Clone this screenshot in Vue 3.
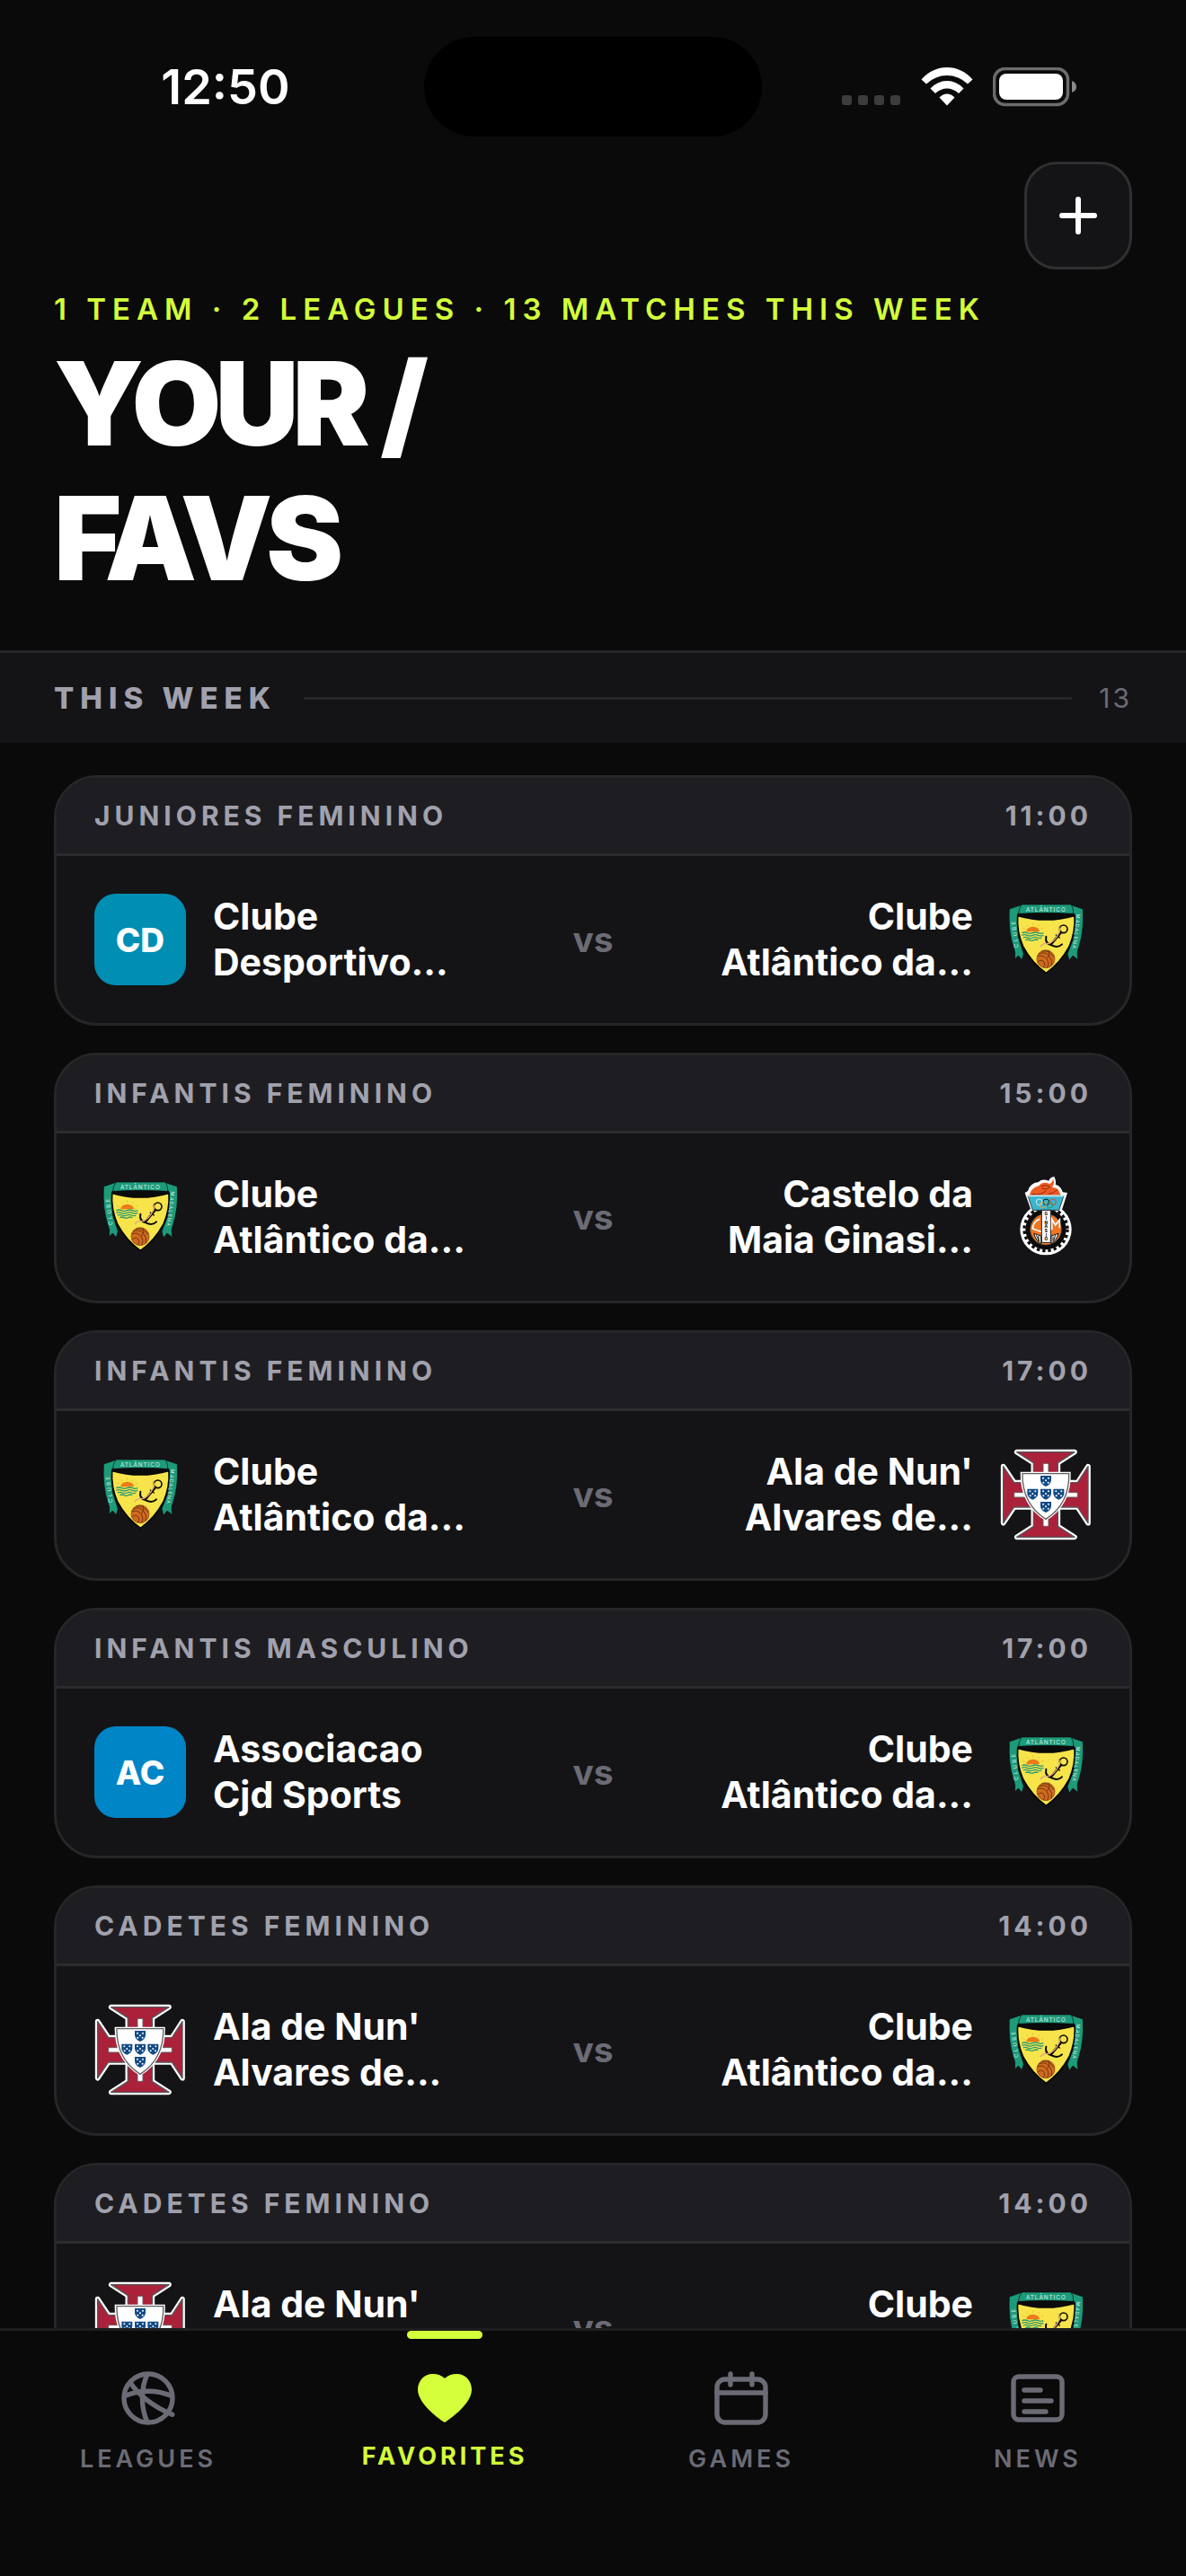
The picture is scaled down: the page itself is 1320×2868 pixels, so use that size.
<template>
  <div class="screen">
    <div class="status-bar">
      <div class="status-time">12:50</div>
      <div class="island"></div>
      <div class="status-icons">
        <svg width="66" height="44" viewBox="0 0 66 44" fill="#3c3c3c">
          <rect x="0" y="31" width="11" height="11" rx="3" />
          <rect x="18" y="31" width="11" height="11" rx="3" />
          <rect x="36" y="31" width="11" height="11" rx="3" />
          <rect x="54" y="31" width="11" height="11" rx="3" />
        </svg>
        <svg class="wifi" width="58" height="44" viewBox="0 0 58 44" fill="#fff">
          <path d="M0.500 13.500Q12.500 0 29 0T57.500 13.500L52 18.500Q42 9 29 9T6 18.500Z" />
          <path d="M10.500 23.500Q18.500 15 29 15T47.500 23.500L42 29Q36 23.500 29 23.500T16 29Z" />
          <path d="M20.500 33.500Q24.500 29.500 29 29.500T37.500 33.500L29 42.500Z" />
        </svg>
        <svg width="94" height="44" viewBox="0 0 94 44">
          <rect x="1.500" y="1.500" width="82" height="40" rx="12" fill="none" stroke="#6c6c6c" stroke-width="3.500" />
          <rect x="7" y="7" width="71" height="29" rx="8" fill="#fff" />
          <path d="M88 15Q93 17 93 21.500T88 28Z" fill="#8a8a8a" />
        </svg>
      </div>
    </div>

    <header class="page-header">
      <button class="btn-add" type="button" aria-label="Add favorite">
        <svg width="42" height="42" viewBox="0 0 42 42" stroke="#fff" stroke-width="6" stroke-linecap="round">
          <path d="M21 3V39M3 21H39" />
        </svg>
      </button>
      <p class="summary">1 TEAM · 2 LEAGUES · 13 MATCHES THIS WEEK</p>
      <h1>YOUR /<br />FAVS</h1>
    </header>

    <div class="section-bar">
      <h2>THIS WEEK</h2>
      <span class="rule"></span>
      <span class="count">13</span>
    </div>

    <main class="match-list">
      <article v-for="m in matches" :key="m.id" class="match">
        <div class="match-head">
          <span class="league">{{ m.league }}</span>
          <span class="time">{{ m.time }}</span>
        </div>
        <div class="match-body">
          <template v-for="(team, i) in m.teams" :key="i">
            <span v-if="i === 1" class="vs">vs</span>
            <div :class="['team', { away: i === 1 }]">
              <svg v-if="team.crest === 'atlantico'" class="crest" viewBox="39 45 306 306">
                <path d="M70 96 L112 82 L104 112 L98 120 L100 190 L118 246 L112 266 L100 252 L88 264 Q92 240 84 224 Q66 170 70 96Z" fill="#1d9a7a" stroke="#0b0b0b" stroke-width="2" />
                <path d="M316 96 L274 82 L282 112 L288 120 L286 190 L264 246 L270 268 L282 252 L300 266 Q294 240 302 224 Q320 170 316 96Z" fill="#1d9a7a" stroke="#0b0b0b" stroke-width="2" />
                <path d="M98 118 Q192 146 288 118 Q292 170 270 222 Q240 278 193 310 Q146 278 116 222 Q94 170 98 118Z" fill="#f6e44a" stroke="#070707" stroke-width="5" />
                <path d="M98 110 H288 V120 Q192 142 98 120Z" fill="#0b0b0c" />
                <path d="M112 81 H276 Q286 96 284 112 Q192 106 101 112 Q100 96 112 81Z" fill="#1d9a7a" stroke="#0b0b0b" stroke-width="2" />
                <text x="193" y="104" font-size="19" text-anchor="middle" letter-spacing="3" fill="#d9f3ea">ATLÂNTICO</text>
                <text transform="translate(100 224) rotate(-97)" font-size="18" letter-spacing="7" fill="#d9f3ea">CLUBE</text>
                <text transform="translate(295 112) rotate(97)" font-size="17" letter-spacing="3" fill="#d9f3ea">MADALENA</text>
                <path d="M127 172 A22 17 0 0 1 171 172Z" fill="#ee7a1a" />
                <path d="M149 150V142M133 154L128 148M165 154L171 147M122 164L113 159M176 164L184 159" stroke="#efae2c" stroke-width="2" />
                <path d="M112 176 q9 -4 18 0 t18 0 t18 0 t18 0M112 184 q9 -4 18 0 t18 0 t18 0 t18 0M116 192 q8 -4 16 0 t16 0 t16 0 t14 0M124 200 q7 -4 14 0 t14 0 t14 0" fill="none" stroke="#2a9a72" stroke-width="4" />
                <g fill="none" stroke="#0a0a0a" stroke-width="5" stroke-linecap="round">
                  <circle cx="251" cy="163" r="13" />
                  <path d="M243 174 L211 212" stroke-width="8" />
                  <path d="M226 183 L238 192" stroke-width="4" />
                  <path d="M193 188 Q188 212 211 217 Q232 228 246 214" stroke-width="6" />
                </g>
                <path d="M234 154 Q244 168 232 182 Q222 204 200 212 Q184 208 174 222" fill="none" stroke="#dfa57a" stroke-width="4" />
                <circle cx="192" cy="263" r="30" fill="#d06a20" stroke="#7a3a10" stroke-width="2" />
                <path d="M164 254 Q184 248 194 262 Q206 278 196 292M168 246 Q190 236 204 254 Q216 268 210 286M178 237 Q202 232 218 256M166 272 Q180 262 186 274 Q192 284 184 291M196 262 Q208 246 200 234" fill="none" stroke="#6f350f" stroke-width="3" />
              </svg>

              <svg v-else-if="team.crest === 'castelo'" class="crest" viewBox="39 42 306 306">
                <circle cx="192" cy="236" r="86" fill="#fff" />
                <path d="M122 114 L132 108 Q138 82 168 78 Q178 66 202 74 Q206 62 220 60 Q228 78 224 86 Q244 92 248 112 L264 114 L244 176 H144Z" fill="#fff" />
                <circle cx="192" cy="236" r="68" fill="#0b0b0c" />
                <circle cx="192" cy="236" r="72" fill="none" stroke="#0b0b0c" stroke-width="10" stroke-dasharray="10 9" />
                <circle cx="192" cy="236" r="52" fill="#ee7623" stroke="#555" stroke-width="2" />
                <path d="M137 124 Q140 98 170 90 Q182 74 204 84 Q214 80 216 68 Q224 82 212 96 Q236 94 242 124Z" fill="#ee5a24" />
                <path d="M146 118 Q176 124 194 106 M176 92 Q194 84 206 94 Q196 106 178 98 M200 118 Q220 116 230 104" fill="none" stroke="#8e2a12" stroke-width="3" />
                <path d="M132 124 H252 L236 172 H148Z" fill="#3ab5cf" stroke="#3a4044" stroke-width="3" />
                <path d="M132 124 H252" stroke="#c9e9ef" stroke-width="5" />
                <g fill="none" stroke-width="3">
                  <circle cx="170" cy="145" r="10" stroke="#d8f1f7" />
                  <circle cx="193" cy="145" r="10" stroke="#111" />
                  <circle cx="216" cy="145" r="10" stroke="#d84830" />
                  <circle cx="182" cy="155" r="10" stroke="#f0a030" />
                  <circle cx="205" cy="155" r="10" stroke="#2f9c5a" />
                </g>
                <path d="M178 172 H208 V280 H178Z" fill="#fff" stroke="#222" stroke-width="3" />
                <g font-size="14" font-weight="800" text-anchor="middle" fill="#111">
                  <text v-for="(c, n) in 'GINASIO'" :key="n" x="193" :y="190 + n * 14">{{ c }}</text>
                </g>
                <path d="M172 202 Q150 208 148 234 L176 244M212 238 V202 L224 222 L238 204 V232" fill="none" stroke="#fff" stroke-width="5" />
                <path d="M152 250 L176 258 V284 Q160 276 152 250ZM234 250 L210 258 V284 Q226 276 234 250Z" fill="#fff" stroke="#111" stroke-width="3" />
                <path d="M160 256 L170 276M168 258 V278M216 260 V278M224 256 L218 274" stroke="#111" stroke-width="3" />
              </svg>

              <svg v-else-if="team.crest === 'ala'" class="crest" viewBox="39 39 306 306">
                <g stroke-linejoin="round">
                  <path :d="crossPath" fill="#fff" stroke="#fff" stroke-width="17" />
                  <path :d="crossPath" fill="#ab2139" stroke="#55555a" stroke-width="4" />
                </g>
                <path d="M183 88 H201 V298 H183ZM86 185 H298 V201 H86Z" fill="#fff" stroke="#66585c" stroke-width="3" />
                <path d="M107 116 H275 Q280 226 192 280 Q104 226 107 116Z" fill="#fff" />
                <path d="M114 122 H269 Q272 222 192 274 Q112 222 114 122Z" fill="#fff" stroke="#606064" stroke-width="4" />
                <g v-for="s in shields" :key="s.id" :transform="`translate(${s.x} ${s.y})`">
                  <path d="M-18 -17 H18 V-2 Q17 12 0 19 Q-17 12 -18 -2Z" fill="#124a86" />
                  <g fill="#fff">
                    <circle cx="-9" cy="-9" r="3" />
                    <circle cx="9" cy="-9" r="3" />
                    <circle cx="0" cy="-1" r="3" />
                    <circle cx="-8" cy="6" r="3" />
                    <circle cx="8" cy="6" r="3" />
                  </g>
                </g>
              </svg>

              <span v-else :class="['avatar', team.tone]">{{ team.initials }}</span>
              <span class="name">{{ team.name }}</span>
            </div>
          </template>
        </div>
      </article>
    </main>

    <nav class="tab-bar">
      <button
        v-for="tab in tabs"
        :key="tab.id"
        type="button"
        :class="['tab', { active: activeTab === tab.id }]"
        @click="activeTab = tab.id"
      >
        <svg class="tab-icon" viewBox="0 0 24 24">
          <path v-for="d in tab.paths" :key="d" :d="d" />
        </svg>
        <span>{{ tab.label }}</span>
      </button>
    </nav>
  </div>
</template>

<script setup>
import { ref } from 'vue'

const activeTab = ref('favorites')

const atlantico = { name: 'Clube\nAtlântico da...', crest: 'atlantico' }
const ala = { name: "Ala de Nun'\nAlvares de...", crest: 'ala' }
const castelo = { name: 'Castelo da\nMaia Ginasi...', crest: 'castelo' }
const desportivo = { name: 'Clube\nDesportivo...', initials: 'CD', tone: 'teal' }
const cjd = { name: 'Associacao\nCjd Sports', initials: 'AC', tone: 'blue' }

const matches = ref([
  { id: 1, league: 'JUNIORES FEMININO', time: '11:00', teams: [desportivo, atlantico] },
  { id: 2, league: 'INFANTIS FEMININO', time: '15:00', teams: [atlantico, castelo] },
  { id: 3, league: 'INFANTIS FEMININO', time: '17:00', teams: [atlantico, ala] },
  { id: 4, league: 'INFANTIS MASCULINO', time: '17:00', teams: [cjd, atlantico] },
  { id: 5, league: 'CADETES FEMININO', time: '14:00', teams: [ala, atlantico] },
  { id: 6, league: 'CADETES FEMININO', time: '14:00', teams: [ala, atlantico] }
])

const tabs = [
  {
    id: 'leagues',
    label: 'LEAGUES',
    paths: [
      'M12 3a9 9 0 1 0 0 18a9 9 0 1 0 0-18',
      'M11.600 3.200c-2.400 5.500-2.400 12 0 17.600',
      'M3.200 11.200c5.500-2.400 12-2.400 17.600 0',
      'M5.400 6.300c3 4.500 8.500 8.700 15.500 11.800'
    ]
  },
  {
    id: 'favorites',
    label: 'FAVORITES',
    paths: ['M12 21C10 19.800 2 14 2 8.800C2 5.400 4.600 3 7.500 3C9.300 3 11 3.600 12 4.700C13 3.600 14.700 3 16.500 3C19.400 3 22 5.400 22 8.800C22 14 14 19.800 12 21Z']
  },
  {
    id: 'games',
    label: 'GAMES',
    paths: [
      'M6 5H18A3 3 0 0 1 21 8V18A3 3 0 0 1 18 21H6A3 3 0 0 1 3 18V8A3 3 0 0 1 6 5Z',
      'M3 10H21',
      'M8 3V7',
      'M16 3V7'
    ]
  },
  {
    id: 'news',
    label: 'NEWS',
    paths: [
      'M5 4H19A2 2 0 0 1 21 6V18A2 2 0 0 1 19 20H5A2 2 0 0 1 3 18V6A2 2 0 0 1 5 4Z',
      'M7 9H13',
      'M7 13H17',
      'M7 17H15'
    ]
  }
]

const crossPath =
  'M95 50H288L232 86V152H298L333 98V287L298 234H232V298L288 334H95L151 298V234H86L50 287V98L86 152H151V86Z'

const shields = [
  { id: 'top', x: 192, y: 146 },
  { id: 'left', x: 148, y: 190 },
  { id: 'center', x: 192, y: 190 },
  { id: 'right', x: 235, y: 190 },
  { id: 'bottom', x: 192, y: 233 }
]
</script>

<style>
body { margin: 0; background: #0a0a0a; }
</style>

<style scoped>
.screen { display: flex; flex-direction: column; height: 100vh; overflow: hidden; background: #0a0a0a; color: #fff; font-family: Inter, "Liberation Sans", sans-serif; }
button { font-family: inherit; cursor: pointer; }

.status-bar { display: grid; grid-template-columns: 1fr 376px 1fr; align-items: center; padding-top: 41px; flex: none; }
.status-time { padding-left: 30px; text-align: center; font-size: 54px; line-height: 60px; font-weight: 600; }
.island { height: 111px; border-radius: 56px; background: #000; }
.status-icons { display: flex; align-items: center; justify-content: flex-end; padding-right: 121px; }
.wifi { margin: 0 22px; }

.page-header { display: flex; flex-direction: column; padding: 28px 60px 50px; flex: none; }
.btn-add { align-self: flex-end; display: flex; align-items: center; justify-content: center; width: 120px; height: 120px; padding: 0; background: #141416; border: 3px solid #303032; border-radius: 36px; }
.summary { margin: 24px 0 0; font-size: 33px; line-height: 40px; font-weight: 600; letter-spacing: 7px; color: #d4ff3a; }
h1 { margin: 10px 0 0; font-size: 129px; line-height: 150px; font-weight: 900; letter-spacing: -7px; }

.section-bar { display: flex; align-items: center; gap: 30px; height: 100px; padding: 0 60px; background: #141416; border-top: 3px solid #262628; flex: none; }
h2 { margin: 0; font-size: 33px; line-height: 40px; font-weight: 800; letter-spacing: 7px; color: #a1a1ad; }
.rule { flex: 1; height: 3px; background: #262628; }
.count { font-size: 30px; line-height: 40px; letter-spacing: 3px; color: #6b6b76; }

.match-list { flex: 1; min-height: 0; overflow: hidden; display: flex; flex-direction: column; gap: 30px; padding: 36px 60px 0; }
.match { flex: none; overflow: hidden; background: #141416; border: 3px solid #262628; border-radius: 48px; }
.match-head { display: flex; justify-content: space-between; align-items: center; height: 84px; padding: 0 42px; background: #1e1e22; border-bottom: 3px solid #2c2c2f; color: #a1a1ad; font-size: 30px; line-height: 36px; font-weight: 700; }
.league { letter-spacing: 5px; }
.time { letter-spacing: 4px; }
.match-body { display: grid; grid-template-columns: 1fr auto 1fr; align-items: center; gap: 30px; padding: 42px; }
.team { display: flex; align-items: center; gap: 30px; }
.away { flex-direction: row-reverse; text-align: right; }
.name { font-size: 41px; line-height: 51px; font-weight: 700; white-space: pre-line; }
.vs { font-size: 39px; line-height: 48px; font-weight: 700; color: #6b6b76; }
.crest, .avatar { width: 102px; height: 102px; flex: none; }
.avatar { display: flex; align-items: center; justify-content: center; border-radius: 24px; font-size: 37px; font-weight: 800; }
.teal { background: #008eb3; }
.blue { background: #0085c7; }

.tab-bar { display: grid; grid-template-columns: repeat(4, 1fr); height: 273px; background: #0a0a0a; border-top: 3px solid #1e1e20; flex: none; }
.tab { position: relative; display: flex; flex-direction: column; align-items: center; gap: 14px; padding: 39px 0 0; background: none; border: none; color: #6b6b76; font-size: 27px; line-height: 36px; font-weight: 600; letter-spacing: 4px; }
.tab-icon { width: 72px; height: 72px; fill: none; stroke: currentColor; stroke-width: 1.8; stroke-linecap: round; stroke-linejoin: round; }
.tab.active { gap: 11px; color: #d4ff3a; font-weight: 700; }
.tab.active .tab-icon { fill: currentColor; stroke: none; }
.tab.active::before { content: ""; position: absolute; top: 0; left: 50%; width: 84px; height: 9px; margin-left: -42px; border-radius: 5px; background: #d4ff3a; }
</style>
